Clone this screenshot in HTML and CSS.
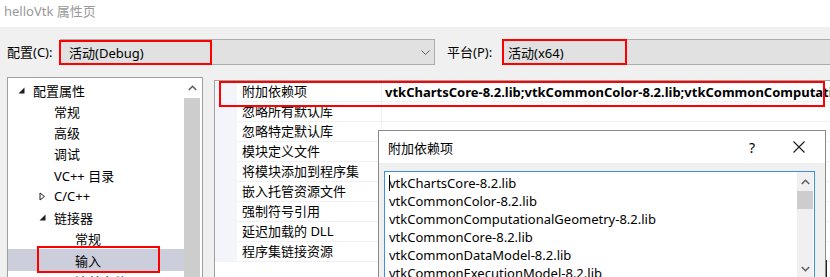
FILE: index.html
```html
<!DOCTYPE html>
<html>
<head>
<meta charset="utf-8">
<link rel="stylesheet" href="styles.css">
</head>
<body>
<div class="titlebar">helloVtk 属性页</div>
<div class="config-row">
  <span class="lbl">配置(C):</span>
  <div class="combo combo-config">
    <span class="combo-text">活动(Debug)</span>
    <svg class="chev" width="9" height="5" viewBox="0 0 9 5"><polyline points="0.5,0.5 4.5,4.5 8.5,0.5" fill="none" stroke="#606060" stroke-width="1"/></svg>
    <span class="hl hl-config"></span>
  </div>
  <span class="lbl lbl-platform">平台(P):</span>
  <div class="combo combo-platform">
    <span class="combo-text">活动(x64)</span>
    <span class="hl hl-platform"></span>
  </div>
</div>
<div class="panes">
  <div class="tree">
    <div class="tree-list">
      <div class="trow l0"><span class="tog"><svg width="7" height="7" viewBox="0 0 7 7"><polygon points="6.5,0.5 6.5,6.5 0.5,6.5" fill="#1e1e1e"/></svg></span><span>配置属性</span></div>
      <div class="trow l1"><span class="tog"></span><span>常规</span></div>
      <div class="trow l1"><span class="tog"></span><span>高级</span></div>
      <div class="trow l1"><span class="tog"></span><span>调试</span></div>
      <div class="trow l1"><span class="tog"></span><span>VC++ 目录</span></div>
      <div class="trow l1"><span class="tog"><svg width="7" height="9" viewBox="0 0 7 9"><polygon points="1,1 5.5,4.5 1,8" fill="none" stroke="#1e1e1e" stroke-width="1"/></svg></span><span>C/C++</span></div>
      <div class="trow l1"><span class="tog"><svg width="7" height="7" viewBox="0 0 7 7"><polygon points="6.5,0.5 6.5,6.5 0.5,6.5" fill="#1e1e1e"/></svg></span><span>链接器</span></div>
      <div class="trow l2"><span class="tog"></span><span>常规</span></div>
      <div class="trow l2 sel"><span class="tog"></span><span>输入</span></div>
      <div class="trow l2"><span class="tog"></span><span>清单文件</span></div>
    </div>
    <div class="vscroll tree-scroll">
      <div class="sbtn"><svg width="9" height="6" viewBox="0 0 9 6"><polyline points="0.8,5 4.5,1.3 8.2,5" fill="none" stroke="#606060" stroke-width="1.6"/></svg></div>
      <div class="thumb long"></div>
    </div>
    <span class="hl hl-tree"></span>
  </div>
  <div class="grid">
    <div class="prow"><div class="pm"></div><div class="pname">附加依赖项</div><div class="pval">vtkChartsCore-8.2.lib;vtkCommonColor-8.2.lib;vtkCommonComputationalGeometry-8.2.lib;vtkCommonCore-8.2.lib</div></div>
    <div class="prow"><div class="pm"></div><div class="pname">忽略所有默认库</div><div class="pval"></div></div>
    <div class="prow"><div class="pm"></div><div class="pname">忽略特定默认库</div><div class="pval"></div></div>
    <div class="prow"><div class="pm"></div><div class="pname">模块定义文件</div><div class="pval"></div></div>
    <div class="prow"><div class="pm"></div><div class="pname">将模块添加到程序集</div><div class="pval"></div></div>
    <div class="prow"><div class="pm"></div><div class="pname">嵌入托管资源文件</div><div class="pval"></div></div>
    <div class="prow"><div class="pm"></div><div class="pname">强制符号引用</div><div class="pval"></div></div>
    <div class="prow"><div class="pm"></div><div class="pname">延迟加载的 DLL</div><div class="pval"></div></div>
    <div class="prow"><div class="pm"></div><div class="pname">程序集链接资源</div><div class="pval"></div></div>
    <span class="hl hl-grid"></span>
  </div>
</div>

<div class="dialog">
  <div class="dlg-title">
    <span class="dlg-name">附加依赖项</span>
    <span class="dlg-help">?</span>
    <svg class="dlg-close" width="12" height="12" viewBox="0 0 12 12"><path d="M0.5 0.5 L11.5 11.5 M11.5 0.5 L0.5 11.5" stroke="#1a1a1a" stroke-width="1.1" fill="none"/></svg>
  </div>
  <div class="textbox">
    <div class="lines">
      <div class="line"><span class="caret"></span>vtkChartsCore-8.2.lib</div>
      <div class="line">vtkCommonColor-8.2.lib</div>
      <div class="line">vtkCommonComputationalGeometry-8.2.lib</div>
      <div class="line">vtkCommonCore-8.2.lib</div>
      <div class="line">vtkCommonDataModel-8.2.lib</div>
      <div class="line">vtkCommonExecutionModel-8.2.lib</div>
    </div>
    <div class="vscroll box-scroll">
      <div class="sbtn"><svg width="9" height="6" viewBox="0 0 9 6"><polyline points="0.8,5 4.5,1.3 8.2,5" fill="none" stroke="#606060" stroke-width="1.6"/></svg></div>
      <div class="thumb short"></div>
      <div class="track"></div>
      <div class="sbtn"><svg width="9" height="6" viewBox="0 0 9 6"><polyline points="0.8,1 4.5,4.7 8.2,1" fill="none" stroke="#606060" stroke-width="1.6"/></svg></div>
    </div>
  </div>
</div>
<span class="cursor-mark"></span>
</body>
</html>
```

FILE: styles.css
```css
* { box-sizing: border-box; }
html, body { margin: 0; padding: 0; }
body {
  width: 830px;
  height: 277px;
  overflow: hidden;
  position: relative;
  background: #f0f0f0;
  font-family: "Noto Sans", "Noto Sans CJK SC", sans-serif;
  font-size: 13px;
  color: #000;
}
.titlebar {
  height: 27px;
  background: #fff;
  color: #999;
  padding-left: 4px;
  line-height: 23px;
  font-size: 13px;
}
.config-row {
  display: flex;
  align-items: center;
  height: 26px;
  margin-top: 12px;
}
.lbl {
  width: 53px;
  margin-left: 7px;
  flex-shrink: 0;
  line-height: 26px;
}
.lbl-platform {
  margin-left: 12px;
  width: 55px;
}
.combo {
  position: relative;
  height: 26px;
  background: #e1e1e1;
  border: 1px solid #adadad;
  display: flex;
  align-items: center;
  flex-shrink: 0;
}
.combo-config { width: 375px; padding-left: 8px; }
.combo-platform { width: 340px; padding-left: 5px; border-right: none; }
.chev { margin-left: auto; margin-right: 4px; }
.hl {
  position: absolute;
  border: 2px solid #f00;
  pointer-events: none;
}
.hl-config { left: -2px; top: 0; width: 153px; height: 25px; }
.hl-platform { left: -1px; top: -1px; width: 125px; height: 26px; }

.panes {
  display: flex;
  align-items: flex-start;
  margin-top: 12px;
}
.tree {
  position: relative;
  margin-left: 7px;
  width: 196px;
  height: 230px;
  background: #fff;
  border: 1px solid #a0a0a0;
  display: flex;
  flex-shrink: 0;
  padding-right: 2px;
}
.tree-list {
  width: 176px;
  padding-top: 1.4px;
}
.trow {
  height: 21.25px;
  display: flex;
  align-items: center;
  white-space: nowrap;
}
.tog {
  width: 16px;
  flex-shrink: 0;
  display: flex;
  align-items: center;
  padding-left: 1px;
}
.l0 { padding-left: 9px; }
.l1 { padding-left: 30px; }
.l2 { padding-left: 51px; }
.sel { background: #cccedb; }
.hl-tree { left: 29px; top: 168px; width: 123px; height: 27px; }

.vscroll {
  width: 16px;
  display: flex;
  flex-direction: column;
  background: #f0f0f0;
}
.tree-scroll { background: #fff; }
.sbtn {
  height: 20px;
  display: flex;
  align-items: center;
  justify-content: center;
  flex-shrink: 0;
}
.thumb { background: #cdcdcd; flex-shrink: 0; }
.thumb.long { flex: 1; margin-top: 0; }
.thumb.short { height: 18px; }
.track { flex: 1; }

.grid {
  position: relative;
  margin-left: 11px;
  margin-top: 3px;
  width: 620px;
  height: 230px;
  flex-shrink: 0;
  background: #fff;
  border: 1px solid #a0a0a0;
  padding-top: 1px;
}
.prow {
  display: flex;
  height: 20px;
}
.pm {
  width: 22px;
  background: #f3f5fa;
  flex-shrink: 0;
}
.pname {
  width: 145px;
  flex-shrink: 0;
  padding-left: 5px;
  line-height: 19px;
  border-bottom: 1px solid #eef0f4;
  border-right: 1px solid #eef0f4;
  white-space: nowrap;
}
.pval {
  flex: 1;
  padding-left: 3px;
  line-height: 20px;
  border-bottom: 1px solid #eef0f4;
  white-space: nowrap;
  overflow: hidden;
  font-weight: bold;
  font-size: 13px;
}
.hl-grid { left: 4px; top: 0; width: 606px; height: 26px; }

.dialog {
  position: absolute;
  left: 378px;
  top: 130px;
  width: 448px;
  height: 160px;
  background: #f0f0f0;
  border: 1px solid #8a8a8a;
}
.dlg-title {
  height: 32px;
  background: #fff;
  display: flex;
  align-items: center;
  padding-left: 9px;
}
.dlg-name { flex: 1; }
.dlg-help {
  font-size: 14px;
  margin-right: 38px;
}
.dlg-close { margin-right: 20px; }
.textbox {
  margin-left: 5px;
  margin-top: 8px;
  width: 431px;
  height: 108px;
  background: #fff;
  border: 1px solid #3d8ee6;
  display: flex;
  padding-right: 1px;
}
.lines {
  flex: 1;
  padding-top: 2px;
  padding-left: 4px;
  overflow: hidden;
}
.line {
  height: 18px;
  line-height: 18px;
  white-space: nowrap;
}
.caret {
  display: inline-block;
  width: 1px;
  height: 16px;
  background: #000;
  vertical-align: -3px;
  margin-right: -1px;
}
.box-scroll .sbtn { height: 19px; }
.cursor-mark {
  position: absolute;
  left: 826px;
  top: 260px;
  width: 1px;
  height: 17px;
  background: #222;
}
```
